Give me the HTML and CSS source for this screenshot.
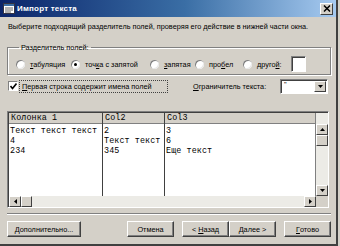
FILE: index.html
```html
<!DOCTYPE html>
<html lang="ru">
<head>
<meta charset="utf-8">
<link rel="stylesheet" href="styles.css">
</head>
<body>
<div class="window">
  <div class="titlebar">
    <svg class="app-icon" width="12" height="11" viewBox="0 0 12 11">
      <rect x="0.5" y="0.5" width="11" height="10" fill="#fff" stroke="#334"/>
      <rect x="1" y="1" width="10" height="2" fill="#3a6ea5"/>
      <line x1="2" y1="5" x2="10" y2="5" stroke="#666"/>
      <line x1="2" y1="7" x2="10" y2="7" stroke="#666"/>
      <line x1="2" y1="9" x2="8" y2="9" stroke="#666"/>
    </svg>
    <span class="title">Импорт текста</span>
    <span class="close"><svg width="8" height="7" viewBox="0 0 8 7"><path d="M1 0.5 L7 6.5 M7 0.5 L1 6.5" stroke="#000" stroke-width="1.5"/></svg></span>
  </div>
  <div class="content">
    <div class="intro">Выберите подходящий разделитель полей, проверяя его действие в нижней части окна.</div>
    <fieldset class="group">
      <legend>Разделитель полей:</legend>
      <div class="radios">
        <label class="radio r1"><span class="rb"></span><span><u>т</u>абуляция</span></label>
        <label class="radio r2"><span class="rb on"></span><span>точ<u>к</u>а с запятой</span></label>
        <label class="radio r3"><span class="rb"></span><span><u>з</u>апятая</span></label>
        <label class="radio r4"><span class="rb"></span><span>про<u>б</u>ел</span></label>
        <label class="radio r5"><span class="rb"></span><span>друго<u>й</u>:</span></label>
        <span class="other-box"></span>
      </div>
    </fieldset>
    <div class="options">
      <label class="check"><span class="cb"><svg width="7" height="7" viewBox="0 0 7 7"><path d="M0.5 3 L2.5 5.5 L6.5 0.5" fill="none" stroke="#000" stroke-width="1.6"/></svg></span><span class="focus"><u>П</u>ервая строка содержит имена полей</span></label>
      <span class="qual-label"><u>О</u>граничитель текста:</span>
      <span class="select"><span class="sel-val">"</span><span class="sel-btn"><svg width="5" height="3" viewBox="0 0 5 3"><path d="M0 0 H5 L2.5 3 Z" fill="#000"/></svg></span></span>
    </div>
    <div class="preview">
      <div class="grid-area">
        <div class="grid">
          <div class="col c1"><div class="hd">Колонка 1</div><div>Текст текст текст</div><div>4</div><div>234</div></div>
          <div class="col c2"><div class="hd">Col2</div><div>2</div><div>Текст текст</div><div>345</div></div>
          <div class="col c3"><div class="hd">Col3</div><div>3</div><div>6</div><div>Еще текст</div></div>
        </div>
        <div class="vscroll">
          <span class="sbtn"><svg width="5" height="3" viewBox="0 0 5 3"><path d="M0 3 H5 L2.5 0 Z" fill="#000"/></svg></span>
          <span class="thumb"></span>
          <span class="track"></span>
          <span class="sbtn"><svg width="5" height="3" viewBox="0 0 5 3"><path d="M0 0 H5 L2.5 3 Z" fill="#000"/></svg></span>
        </div>
      </div>
      <div class="hscroll">
        <span class="sbtn"><svg width="3" height="5" viewBox="0 0 3 5"><path d="M3 0 V5 L0 2.5 Z" fill="#000"/></svg></span>
        <span class="hthumb"></span>
        <span class="htrack"></span>
        <span class="sbtn"><svg width="3" height="5" viewBox="0 0 3 5"><path d="M0 0 V5 L3 2.5 Z" fill="#000"/></svg></span>
        <span class="corner"></span>
      </div>
    </div>
    <div class="sep"></div>
    <div class="buttons">
      <span class="btn wide">Дополнительно...</span>
      <span class="spacer"></span>
      <span class="btn">Отмена</span>
      <span class="btn nav"><span>&lt; <u>Н</u>азад</span></span>
      <span class="btn nav2"><span><u>Д</u>алее &gt;</span></span>
      <span class="btn last"><u>Г</u>отово</span>
    </div>
  </div>
</div>
</body>
</html>
```
FILE: styles.css
```css
html, body {
  margin: 0;
  padding: 0;
  background: #d4d0c8;
}
body {
  width: 340px;
  height: 246px;
  overflow: hidden;
  font-family: "Liberation Sans", Arial, sans-serif;
  font-size: 7.3px;
  color: #000;
  white-space: nowrap;
}
u { text-decoration: underline; }
.window {
  width: 336px;
  height: 244px;
  border-right: 2px solid #404040;
  border-bottom: 2px solid #404040;
  box-sizing: content-box;
  display: flex;
  flex-direction: column;
}
.titlebar {
  height: 17px;
  background: linear-gradient(to right, #0a246a 0%, #3a6ea5 55%, #a6caf0 100%);
  display: flex;
  align-items: center;
  padding: 0 3px 0 3px;
  color: #fff;
}
.app-icon { flex: none; }
.title {
  font-weight: bold;
  margin-left: 2px;
  font-size: 8px;
  letter-spacing: 0.2px;
  flex: 1;
}
.close {
  width: 11px;
  height: 10px;
  background: #d4d0c8;
  border: 1px solid;
  border-color: #fff #404040 #404040 #fff;
  display: flex;
  align-items: center;
  justify-content: center;
}
.content {
  flex: 1;
  display: flex;
  flex-direction: column;
  padding: 0 5px 0 7px;
}
.intro {
  margin-top: 4px;
  height: 12px;
  line-height: 12px;
  padding-left: 1px;
}
.group {
  margin: 10px 0 0 0;
  padding: 4px 6px 6px 8px;
  border: 1px solid #808080;
  box-shadow: 1px 1px 0 #fff, inset 1px 1px 0 #fff;
  height: 20px;
}
.group legend {
  padding: 0 2px;
  margin-left: 3px;
}
.radios {
  display: flex;
  align-items: center;
  height: 16px;
}
.radio {
  display: flex;
  align-items: center;
  flex: none;
}
.r1 { width: 55px; }
.r2 { width: 79px; }
.r3 { width: 45px; }
.r4 { width: 48px; }
.r5 { width: 48px; }
.rb {
  width: 9px;
  height: 9px;
  border-radius: 50%;
  background: #fff;
  box-shadow: inset 1px 1px 0 #808080, inset -1px -1px 0 #e8e8e8;
  margin-right: 5px;
  position: relative;
  flex: none;
}
.rb.on::after {
  content: "";
  position: absolute;
  left: 3px;
  top: 3px;
  width: 3px;
  height: 3px;
  border-radius: 50%;
  background: #000;
}
.other-box {
  width: 13px;
  height: 14px;
  background: #fff;
  border: 1px solid;
  border-color: #808080 #fff #fff #808080;
  box-shadow: inset 1px 1px 0 #404040;
}
.options {
  display: flex;
  align-items: center;
  height: 16px;
  margin-top: 3px;
}
.check {
  display: flex;
  align-items: center;
  margin-left: 1px;
}
.cb {
  width: 8px;
  height: 8px;
  background: #fff;
  border: 1px solid;
  border-color: #808080 #fff #fff #808080;
  display: flex;
  align-items: center;
  justify-content: center;
  margin-right: 1px;
}
.focus {
  border: 1px dotted #404040;
  padding: 1px 2px;
  width: 143px;
}
.qual-label {
  margin-left: 25px;
  width: 87px;
}
.select {
  width: 46px;
  height: 13px;
  background: #fff;
  border: 1px solid;
  border-color: #808080 #fff #fff #808080;
  display: flex;
  box-shadow: inset 1px 1px 0 #404040;
}
.sel-val {
  flex: 1;
  padding-left: 3px;
  line-height: 9px;
}
.sel-btn {
  width: 10px;
  margin: 1px 1px 1px 0;
  background: #d4d0c8;
  border: 1px solid;
  border-color: #fff #404040 #404040 #fff;
  display: flex;
  align-items: center;
  justify-content: center;
}
.preview {
  margin-top: 17px;
  margin-right: 2px;
  border: 1px solid;
  border-color: #808080 #fff #fff #808080;
  box-shadow: inset 1px 1px 0 #404040;
  height: 94px;
  display: flex;
  flex-direction: column;
  padding: 1px 0 0 1px;
  background: #d4d0c8;
}
.grid-area {
  flex: 1;
  display: flex;
  min-height: 0;
}
.grid {
  flex: 1;
  display: flex;
  background: #fff;
  font-family: "Liberation Mono", monospace;
  font-size: 8.4px;
  line-height: 10px;
  letter-spacing: 0.1px;
}
.col {
  border-right: 1px solid #404040;
  overflow: hidden;
  white-space: nowrap;
}
.col > div { padding-left: 1px; height: 10px; }
.col > .hd {
  background: #d4d0c8;
  height: 10px;
  border-bottom: 1px solid #808080;
  padding-left: 2px;
  margin-bottom: 2px;
}
.c1 { width: 93px; }
.c2 { width: 61px; }
.c3 { flex: 1; border-right: 1px solid #808080; }
.vscroll {
  width: 12px;
  display: flex;
  flex-direction: column;
  background: #ecebe6;
  padding-top: 11px;
}
.sbtn {
  width: 10px;
  height: 9px;
  background: #d4d0c8;
  border: 1px solid;
  border-color: #fff #404040 #404040 #fff;
  display: flex;
  align-items: center;
  justify-content: center;
  flex: none;
}
.thumb {
  width: 10px;
  height: 9px;
  background: #d4d0c8;
  border: 1px solid;
  border-color: #fff #404040 #404040 #fff;
}
.track { flex: 1; }
.hscroll {
  height: 11px;
  display: flex;
  background: #ecebe6;
}
.hthumb {
  width: 9px;
  height: 9px;
  background: #d4d0c8;
  border: 1px solid;
  border-color: #fff #404040 #404040 #fff;
}
.htrack { flex: 1; }
.corner { width: 12px; background: #d4d0c8; }
.sep {
  margin-top: 5px;
  height: 0;
  border-top: 1px solid #808080;
  border-bottom: 1px solid #fff;
}
.buttons {
  display: flex;
  margin-top: 6px;
  height: 16px;
}
.btn {
  height: 14px;
  border: 1px solid;
  border-color: #fff #404040 #404040 #fff;
  box-shadow: inset -1px -1px 0 #808080;
  display: flex;
  align-items: center;
  justify-content: center;
  width: 45px;
}
.btn.wide { width: 72px; }
.spacer { flex: 1; }
.btn.nav { margin-left: 8px; }
.btn.last { margin-left: 8px; }
```
